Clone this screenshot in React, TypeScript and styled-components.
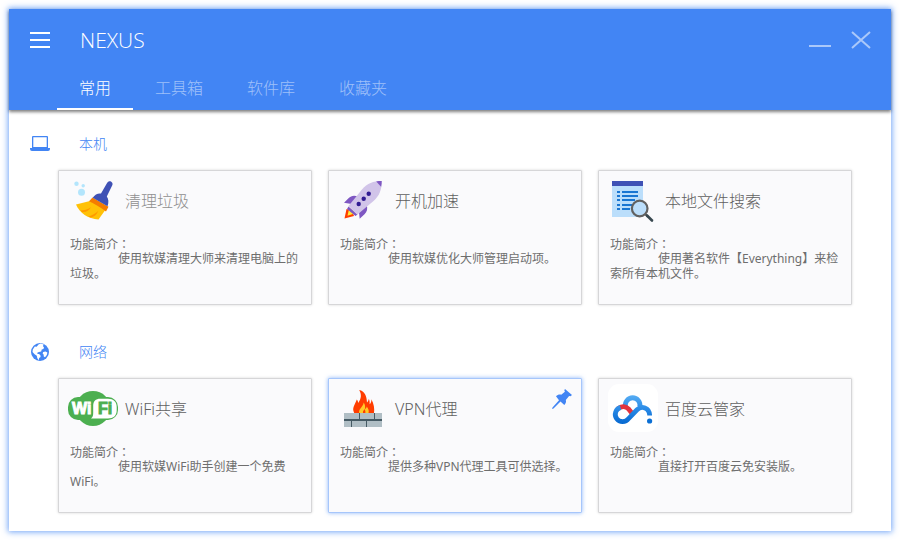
import React from 'react';
import styled, { createGlobalStyle } from 'styled-components';

const BLUE = '#4285f4';

const GlobalStyle = createGlobalStyle`
  *, *::before, *::after { box-sizing: border-box; }
  body {
    margin: 0;
    background: #fff;
    color: #6e6e6e;
    font-family: 'Open Sans', 'Noto Sans CJK SC', sans-serif;
  }
  button {
    margin: 0;
    padding: 0;
    border: 0;
    background: none;
    color: inherit;
    font: inherit;
    text-align: left;
    cursor: pointer;
  }
  h1, h2, h3, p { margin: 0; font-weight: inherit; }
  svg { display: block; }
`;

const Window = styled.div`
  margin: 9px;
  background: #fff;
  box-shadow: 0 0 6px 1px rgba(66, 133, 244, 0.75);
`;

const Header = styled.header`
  background: ${BLUE};
  color: #fff;
  box-shadow: 0 2px 3px rgba(0, 0, 0, 0.5);
`;

const TitleBar = styled.div`
  display: flex;
  align-items: center;
  height: 62px;
  padding: 0 20px 0 21px;
`;

const AppName = styled.h1`
  flex: 1;
  margin-left: 30px;
  font-size: 21px;
  line-height: 28px;
  font-weight: 300;
`;

const WindowControls = styled.div`
  display: flex;
  gap: 20px;
  opacity: 0.55;
`;

const TabList = styled.nav`
  display: flex;
  padding-left: 48px;
`;

const Tab = styled.button<{ $active?: boolean }>`
  height: 39px;
  padding: 0 22px 3px;
  border-bottom: 2px solid ${(p) => (p.$active ? '#fff' : 'transparent')};
  color: ${(p) => (p.$active ? '#fff' : 'rgba(255, 255, 255, 0.5)')};
  font-size: 16px;
  line-height: 34px;
  font-weight: 300;
`;

const Main = styled.main`
  display: grid;
  gap: 21px;
  padding: 8px 39px 18px 21px;
`;

const SectionHeading = styled.h2`
  display: flex;
  align-items: center;
  gap: 29px;
  height: 52px;
  color: ${BLUE};
  font-size: 14px;
  line-height: 20px;
  font-weight: 300;
`;

const CardGrid = styled.div`
  display: grid;
  grid-template-columns: repeat(3, 1fr);
  gap: 16px;
  margin-left: 28px;
`;

const Card = styled.article<{ $pinned?: boolean }>`
  position: relative;
  display: grid;
  min-height: 135px;
  border: 1px solid ${(p) => (p.$pinned ? '#a6c6fb' : '#d6d6d8')};
  border-radius: 1px;
  background: #fafafc;
  box-shadow: 0 0 ${(p) => (p.$pinned ? '4px rgba(66, 133, 244, 0.6)' : '3px rgba(0, 0, 0, 0.16)')};
`;

const Launch = styled.button`
  display: flex;
  flex-direction: column;
  padding: 5px 11px;
`;

const CardHead = styled.span`
  display: flex;
  align-items: center;
  gap: 7px;
  height: 50px;
  margin-left: -2px;
`;

const CardTitle = styled.span<{ $dim?: boolean }>`
  color: ${(p) => (p.$dim ? '#8f8f8f' : '#606060')};
  font-family: 'Noto Sans', 'Noto Sans CJK SC', sans-serif;
  font-size: 16px;
  line-height: 24px;
  font-weight: 300;
`;

const Description = styled.span`
  margin-top: 10px;
  font-family: 'Noto Sans', 'Noto Sans CJK SC', sans-serif;
  font-size: 12px;
  line-height: 15px;
`;

const DescriptionLabel = styled.span`
  display: block;
  font-family: 'Noto Sans CJK TC', sans-serif;
`;

const DescriptionText = styled.span`
  display: block;
  text-indent: 48px;
`;

const PinButton = styled.button`
  position: absolute;
  top: 10px;
  right: 9px;
`;

const MenuIcon = () => (
  <svg width="20" height="20" viewBox="0 0 20 20" fill="#fff">
    <path d="M0 2h20v2H0zM0 9h20v2H0zM0 16h20v2H0z" />
  </svg>
);

const MinimizeIcon = () => (
  <svg width="22" height="20" viewBox="0 0 22 20" fill="#fff">
    <path d="M0 15h22v2H0z" />
  </svg>
);

const CloseIcon = () => (
  <svg width="20" height="20" viewBox="0 0 20 20" fill="none" stroke="#fff" strokeWidth="2">
    <path d="M1 2l18 16M19 2L1 18" />
  </svg>
);

const LaptopIcon = () => (
  <svg width="20" height="18" viewBox="0 0 20 18" fill={BLUE}>
    <path fillRule="evenodd" d="M3 1h14a1 1 0 0 1 1 1v11h2v1a2 2 0 0 1-2 2H2a2 2 0 0 1-2-2v-1h2V2a1 1 0 0 1 1-1zM3.300 2.300V12h13.400V2.300z" />
  </svg>
);

const GlobeIcon = () => (
  <svg width="20" height="20" viewBox="0 0 20 20">
    <circle cx="10" cy="10" r="9" fill={BLUE} />
    <path fill="#fff" d="M8.500 2.500l2-.9 3.300.9-.9 1.600 1.100 1.300-.6 1.600-1.700.4-.5 2.100-2.300.4-1.600.9.200 1.200 1.500.1 1.400 1.200.2 1.700-1.500 1-.2 2.200-1.600-2-.5-2.500-2.200-1.500L2.500 10l.3-2.600L4.800 4.500l1.800.3zM13.200 9.900l2.300-.4 1.900 1-.6 2.600-1.800 2.100-1.200-.8-.2-1.800-1-1.200z" />
  </svg>
);

const PinIcon = () => (
  <svg width="20" height="20" viewBox="0 0 20 20" fill={BLUE}>
    <path d="M13 0l7 6-1.500 1.200-1.400-.3-3.300 4c.6 1.800.1 3.400-1.500 5L8.500 12.600 1.500 19.500 0 20l.5-1.500 6.500-7.300L4 7.200c1.700-1.500 3.300-1.900 5.200-1.400l3.700-3-.6-1.600z" />
  </svg>
);

const BroomIcon = () => (
  <svg width="50" height="50" viewBox="0 0 50 50">
    <g fill="#b3e5fc">
      <circle cx="8.500" cy="7.700" r="2.200" />
      <circle cx="15.200" cy="9.700" r="1.700" />
      <circle cx="13.500" cy="16.300" r="3.500" />
    </g>
    <path d="M22 25L8 28.500c3.500 8.500 12 14.200 22.500 15L38 33z" fill="#ffc107" />
    <path d="M12.500 34.500c3.800 0 7-1 10.500-3.200-2 3.500-5 5.200-9 4.700zM20.500 40.500c3.800-1 6.800-2.800 9.800-5.700-1.500 4-4.300 6.300-8 6.700z" fill="#ff9800" />
    <path d="M24.500 21.500l-3.500 3.700c5 2.300 11.800 6 17 10.300l2.500-4.700z" fill="#f57c00" />
    <path d="M39.200 6.800c1.700-3.300 6.500-1 5.200 2.300l-5.600 11.400c1.800 2.200 2.100 6.200.7 9.700L24.700 21.700c2.200-3.300 5.300-4.700 8.300-4.200z" fill="#3f51b5" />
  </svg>
);

const RocketIcon = () => (
  <svg width="50" height="50" viewBox="0 0 50 50">
    <path d="M8.500 33L6.500 42.500l9.500-2.500-2-5.500z" fill="#ff3d00" />
    <path d="M10.800 34L9.500 39.800l5.500-1.800 2-1.500-4.500-4z" fill="#ffeb3b" />
    <path d="M20 20.500c-4-1.500-7-.8-9.500 1.700L6 26.800l7.500 1.200zM21 36.500l.7 6.300 4.800-4.500c2.600-2.500 3.500-5.500 2-9.500zM10.500 30.500L9 33l8.500 7 2-1.500z" fill="#7e57c2" />
    <path d="M43.700 5C35 5 29.500 7.200 24 13.500L10.500 30l8.700 8.700L35.500 25C41.500 19.500 43.700 14 43.700 5z" fill="#d1c4e9" />
    <path d="M38.200 5.500c1.700-.4 3.500-.5 5.500-.5 0 2.200-.2 4-.6 5.800z" fill="#7e57c2" />
    <g fill="#311b92">
      <circle cx="30.700" cy="17.800" r="2.200" />
      <circle cx="25.700" cy="22.800" r="2.200" />
      <circle cx="20.700" cy="28" r="2.200" />
    </g>
  </svg>
);

const FileSearchIcon = () => (
  <svg width="50" height="50" viewBox="0 0 50 50">
    <path d="M4 10h31v31H4z" fill="#bbdefb" />
    <path d="M4 5h31v5H4z" fill="#3f51b5" />
    <path d="M9 15h3v2H9zM14 15h16v2H14zM9 19h3v2H9zM14 19h16v2H14zM9 23h3v2H9zM14 23h13v2H14zM9 28h3v2H9zM14 28h10v2H14zM9 32h3v2H9zM14 32h8v2H14z" fill="#1976d2" />
    <path d="M37 38l3 3" stroke="#616161" strokeWidth="2" />
    <circle cx="31.700" cy="32.500" r="7.800" fill="#bbdefb" stroke="#616161" strokeWidth="2.200" />
    <path d="M39 39.500l5 5" stroke="#37474f" strokeWidth="2.600" strokeLinecap="round" />
  </svg>
);

const WifiMark = styled.text`
  font-family: 'Liberation Sans', sans-serif;
  font-size: 16px;
  font-weight: 700;
`;

const WifiIcon = () => (
  <svg width="50" height="50" viewBox="0 0 50 50">
    <ellipse cx="25" cy="24.500" rx="17.500" ry="17.500" fill="#4caf50" />
    <rect y="13" width="50" height="23" rx="10" fill="#4caf50" />
    <path d="M23 34.500c2-1.500 2.200-3.500 2.200-6V22c0-5 2.500-7.300 7-7.300h7.800c5.500 0 8.700 3 8.700 8v3.800c0 5-3.200 8-8.700 8z" fill="#fff" />
    <WifiMark x="4" y="30" fill="#fff" stroke="#fff">Wi</WifiMark>
    <WifiMark x="30" y="30" fill="#4caf50" stroke="#4caf50">Fi</WifiMark>
  </svg>
);

const FirewallIcon = () => (
  <svg width="50" height="50" viewBox="0 0 50 50">
    <path d="M16.200 29c-2.600-5.500.6-7.500 2.600-13.500.8 1 1.300 2 1.400 3.500 3.200-4.500 3.600-8.500 1-13 5.500 1.200 7.600 6 7.800 12.500 1-1 1.600-2.200 1.800-3.800 1 2.300.9 4 .9 5.500 1.300-1.200 1.800-3 1.700-5 2.500 4.500 3.300 9.500 2.600 13.800z" fill="#ff3d00" />
    <path d="M21.200 29c-.8-4.500 3.800-5.500 4.500-10.500 1.600 2.200 1.600 4.500 1.200 6.700 1.200-.7 1.700-1.700 1.900-2.700 1.600 2.200 2.400 4.500 1.700 6.500z" fill="#ffca28" />
    <path d="M25 29c-.4-2 1-2.500 1.500-4 .7 1.500 1.200 2.500.8 4z" fill="#ff3d00" />
    <path d="M6 29h38v14H6z" fill="#b0bec5" />
    <path d="M6 35h38v2H6zM21 29h1v6h-1zM36 29h1v6h-1zM13 37h1v6h-1zM28 37h1v6h-1z" fill="#455a64" />
  </svg>
);

const CloudDriveIcon = () => (
  <svg width="50" height="50" viewBox="0 0 50 50">
    <defs>
      <linearGradient id="driveBlue" x1="0" y1="10" x2="0" y2="40" gradientUnits="userSpaceOnUse">
        <stop offset="0" stopColor="#5ab0f5" />
        <stop offset="0.500" stopColor="#2a8ae6" />
        <stop offset="1" stopColor="#0668d0" />
      </linearGradient>
    </defs>
    <rect y="0" width="50" height="48" rx="11" fill="#fff" />
    <path d="M17.500 22.500a7.300 7.300 0 1 1 14.300 0" fill="none" stroke="url(#driveBlue)" strokeWidth="4.800" />
    <path d="M10 24.700c3.300-3.100 7.800-2.800 10.800.5l3.400 4.300" fill="none" stroke="#e2343f" strokeWidth="4.800" />
    <path d="M12.500 23.400a7.300 7.300 0 1 0 8 11.300L29 25.800c4.500-4.500 12.500-2.200 12.700 5.700" fill="none" stroke="url(#driveBlue)" strokeWidth="4.800" />
    <circle cx="41.600" cy="37" r="2.600" fill="#0b6fd4" />
  </svg>
);

interface Tool {
  title: string;
  text: string;
  icon: React.ReactNode;
  dim?: boolean;
  pinned?: boolean;
}

const sections: { name: string; icon: React.ReactNode; tools: Tool[] }[] = [
  {
    name: '本机',
    icon: <LaptopIcon />,
    tools: [
      { title: '清理垃圾', text: '使用软媒清理大师来清理电脑上的垃圾。', icon: <BroomIcon />, dim: true },
      { title: '开机加速', text: '使用软媒优化大师管理启动项。', icon: <RocketIcon /> },
      { title: '本地文件搜索', text: '使用著名软件【Everything】来检索所有本机文件。', icon: <FileSearchIcon /> },
    ],
  },
  {
    name: '网络',
    icon: <GlobeIcon />,
    tools: [
      { title: 'WiFi共享', text: '使用软媒WiFi助手创建一个免费WiFi。', icon: <WifiIcon /> },
      { title: 'VPN代理', text: '提供多种VPN代理工具可供选择。', icon: <FirewallIcon />, pinned: true },
      { title: '百度云管家', text: '直接打开百度云免安装版。', icon: <CloudDriveIcon /> },
    ],
  },
];

const tabs = ['常用', '工具箱', '软件库', '收藏夹'];

const ToolCard = ({ title, text, icon, dim, pinned }: Tool) => (
  <Card $pinned={pinned}>
    <Launch type="button">
      <CardHead>
        {icon}
        <CardTitle $dim={dim}>{title}</CardTitle>
      </CardHead>
      <Description>
        <DescriptionLabel>功能简介：</DescriptionLabel>
        <DescriptionText>{text}</DescriptionText>
      </Description>
    </Launch>
    {pinned && (
      <PinButton type="button" aria-label="取消固定">
        <PinIcon />
      </PinButton>
    )}
  </Card>
);

export default function App() {
  const [active, setActive] = React.useState(tabs[0]);
  return (
    <>
      <GlobalStyle />
      <Window>
        <Header>
          <TitleBar>
            <button type="button" aria-label="菜单"><MenuIcon /></button>
            <AppName>NEXUS</AppName>
            <WindowControls>
              <button type="button" aria-label="最小化"><MinimizeIcon /></button>
              <button type="button" aria-label="关闭"><CloseIcon /></button>
            </WindowControls>
          </TitleBar>
          <TabList>
            {tabs.map((tab) => (
              <Tab key={tab} type="button" $active={tab === active} onClick={() => setActive(tab)}>
                {tab}
              </Tab>
            ))}
          </TabList>
        </Header>
        <Main>
          {sections.map((section) => (
            <section key={section.name}>
              <SectionHeading>
                {section.icon}
                {section.name}
              </SectionHeading>
              <CardGrid>
                {section.tools.map((tool) => (
                  <ToolCard key={tool.title} {...tool} />
                ))}
              </CardGrid>
            </section>
          ))}
        </Main>
      </Window>
    </>
  );
}
